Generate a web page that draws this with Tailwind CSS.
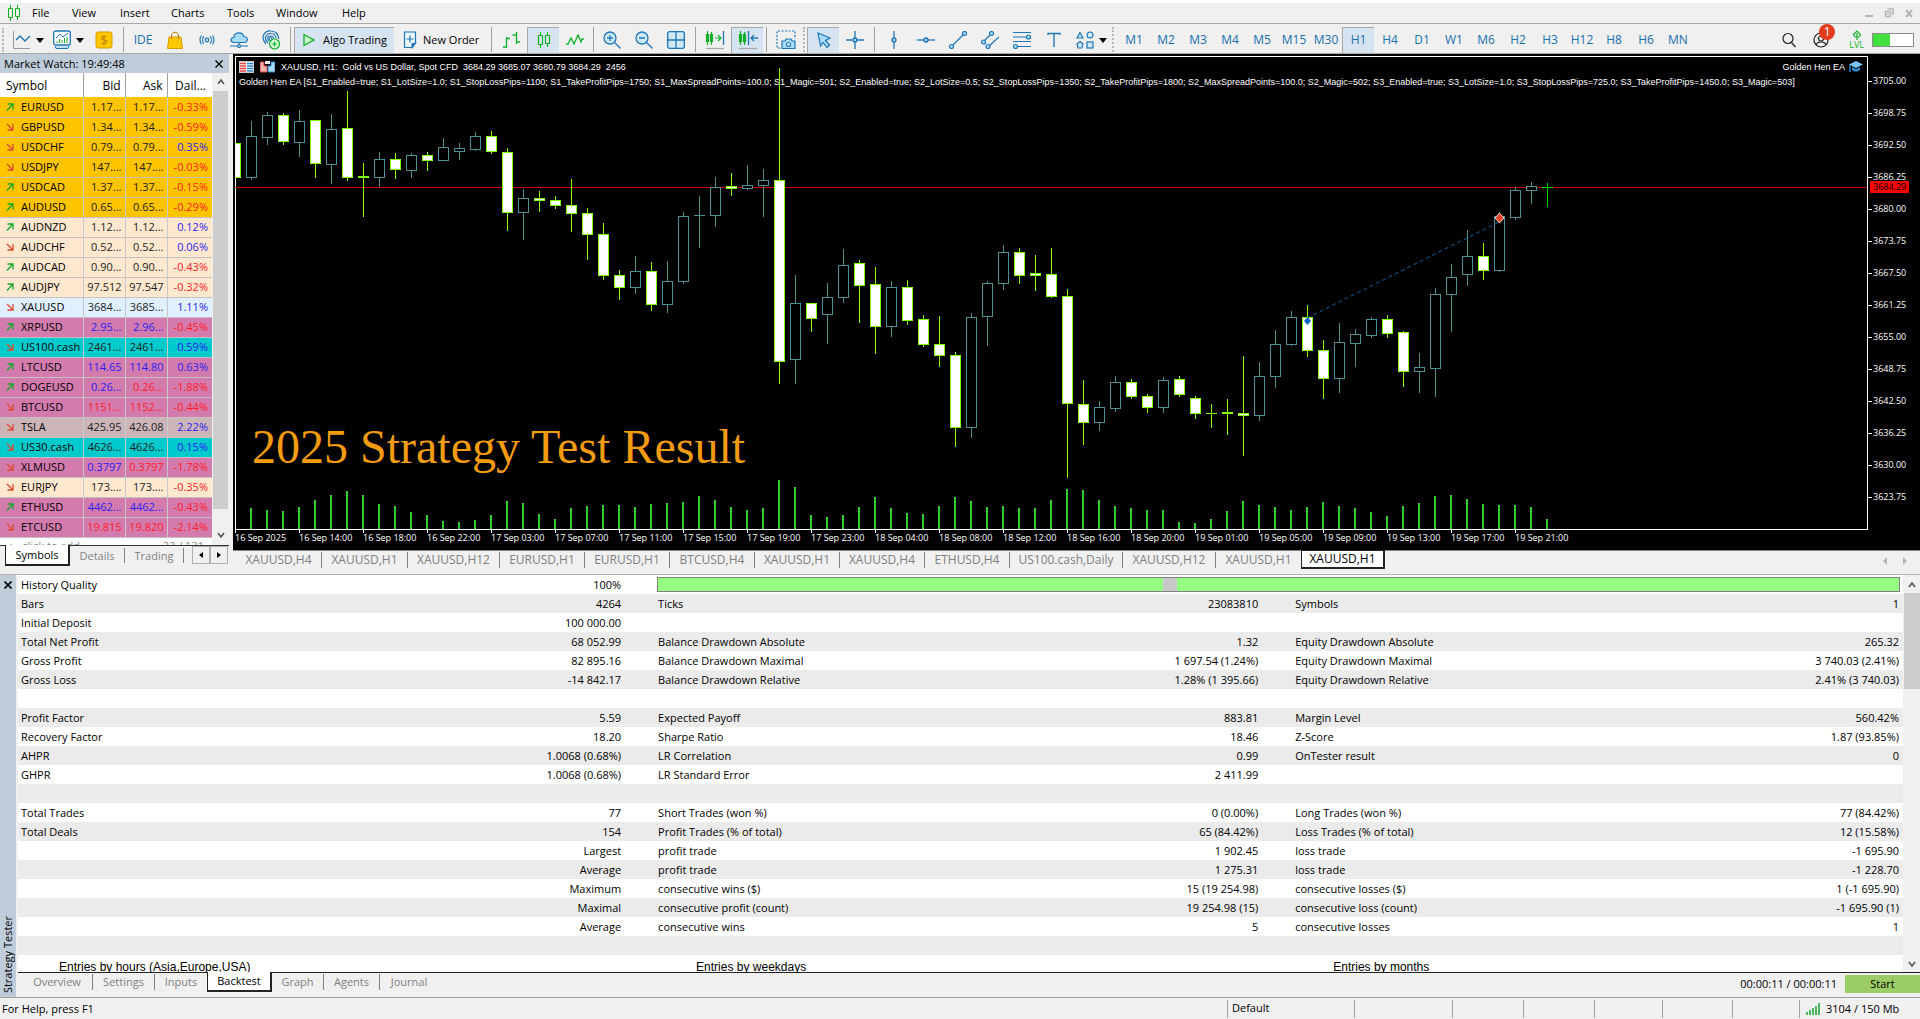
<!DOCTYPE html>
<html lang="en">
<head>
    <meta charset="UTF-8">
    <title>XAUUSD,H1 - Strategy Tester</title>
    <meta name="viewport" content="width=device-width, initial-scale=1.0">
    <script src="https://cdn.jsdelivr.net/npm/@tailwindcss/browser@4"></script>
</head>
<body class="h-screen flex flex-col overflow-hidden bg-[#f0f0f0] text-black font-['Open_Sans','Noto_Sans',sans-serif] text-[11px] leading-4 whitespace-nowrap">

    <!-- Menu bar -->
    <header class="flex items-center h-6 pt-[3px] border-b border-[#a8a8a8] shadow-[inset_0_3px_0_#fff]">
        <svg class="ml-2 w-3 h-4" viewBox="0 0 12 16" fill="none" stroke="#10b020"><path d="M2.500 0v3M2.500 13v3M9.500 0v3M9.500 12v3M.5 3.500h4v9h-4zM7.500 3.500h4v8h-4z"/></svg>
        <nav class="flex ml-3">
            <button class="w-10 text-left">File</button>
            <button class="w-12 text-left">View</button>
            <button class="w-[51px] text-left">Insert</button>
            <button class="w-14 text-left">Charts</button>
            <button class="w-[49px] text-left">Tools</button>
            <button class="w-[66px] text-left">Window</button>
            <button class="text-left">Help</button>
        </nav>
        <div class="ml-auto mr-1.5 flex items-center gap-2.5 text-[#b4b4b4]">
            <button aria-label="Minimize"><svg class="w-2.5 h-2.5" viewBox="0 0 10 10"><path d="M1 8h8" stroke="currentColor" stroke-width="2"/></svg></button>
            <button aria-label="Restore"><svg class="w-2.5 h-2.5" viewBox="0 0 10 10" fill="none" stroke="currentColor" stroke-width="1.500"><path d="M1.500 3.500h5v5h-5zM3.500 1h5.500v6M4 5v2"/></svg></button>
            <button aria-label="Close"><svg class="w-2.5 h-2.5" viewBox="0 0 10 10"><path d="M2 2l6 7M8 2L2 9" stroke="currentColor" stroke-width="2"/></svg></button>
        </div>
    </header>

    <!-- Toolbar -->
    <div class="flex items-center h-[30px] pt-0.5 border-b border-[#a8a8a8] text-[#1a6fad] text-[12px]">
        <span class="h-6 ml-0.5 mr-1 border-l-2 border-dotted border-[#b8b8b8]"></span>
        <button class="flex items-center gap-1 w-10 pl-[5px]" aria-label="Line chart">
            <svg class="w-[18px] h-[18px]" viewBox="0 0 18 18" fill="none"><path d="M.5 0v17.500H17" stroke="#999"/><path d="M3 9l4-4 5 5 5-5" stroke="#1f75b5" stroke-width="1.400"/></svg>
            <svg class="w-2.5 h-2 text-black" viewBox="0 0 10 8"><path d="M1 2h8L5 7z"/></svg>
        </button>
        <button class="flex items-center gap-1 w-10 pl-[5px]" aria-label="Templates">
            <svg class="w-[18px] h-5" viewBox="0 0 18 20" fill="none" stroke="#1f75b5"><rect x=".7" y="1" width="16.600" height="14" rx="2" fill="#fff" stroke-width="1.300"/><path d="M2 16l1 2.500h12l1-2.500" fill="#bfe3fb"/><path d="M3 8l4-4 3 3 5-4"/><path d="M4 13v-2M6.500 13V9M9 13v-3M11.500 13V8M14 13V7" stroke="#20b030"/></svg>
            <svg class="w-2.5 h-2" viewBox="0 0 10 8"><path d="M1 2h8L5 7z"/></svg>
        </button>
        <button class="flex w-8 justify-center" aria-label="Quotes">
            <svg class="w-[18px] h-[18px]" viewBox="0 0 18 18"><rect x="1" y="1" width="16" height="16" rx="2" fill="#ffc800" stroke="#d69a00"/><text x="9" y="14" text-anchor="middle" font-size="13" fill="#b87800">$</text></svg>
        </button>
        <span class="mx-[3px] w-px h-[25px] bg-[#a0a0a0]"></span>
        <button class="w-8">IDE</button>
        <button class="flex w-8 justify-center" aria-label="Market">
            <svg class="w-4 h-[18px]" viewBox="0 0 16 18" fill="none"><path d="M2 6h12l1.500 11.500H.5z" fill="#ffc800" stroke="#d69a00"/><path d="M4.500 8V5c0-5 7-5 7 0v3" stroke="#b87800"/></svg>
        </button>
        <button class="flex w-8 justify-center" aria-label="Signals">
            <svg class="w-[18px] h-4" viewBox="0 0 18 16" fill="none" stroke="#1f75b5" stroke-width="1.200"><circle cx="9" cy="8" r="1.800" fill="#bfe3fb"/><path d="M6 4.500c-2 2-2 5 0 7M12 4.500c2 2 2 5 0 7M3.500 3.500c-2 3-2 6 0 9M14.500 3.500c2 3 2 6 0 9"/></svg>
        </button>
        <button class="flex w-8 justify-center" aria-label="Cloud">
            <svg class="w-[18px] h-4" viewBox="0 0 18 16" fill="none" stroke="#1f75b5" stroke-width="1.200"><path d="M4 10.500c-4-.5-4-5 0-5 0-6 9-6 9.500-1 5 0 5 6 .5 6z" fill="#a9dcfb"/><path d="M9 10.500v3M0 14h7M11 14h7"/><circle cx="9" cy="14" r="1.500"/></svg>
        </button>
        <button class="flex w-8 justify-center" aria-label="Virtual hosting">
            <svg class="w-[18px] h-5" viewBox="0 0 18 20" fill="none" stroke="#1f75b5" stroke-width="1.200"><path d="M4 14C-3 6 4 0 9 1c5 0 8 4 7.500 8M6 13C0 7 6 3 9 3.500c3 0 5 2 5 5M7 11c-3-4 0-5 2-5 1.500 0 2.500 1 2.500 2.500"/><circle cx="8.500" cy="9" r="1.500"/><circle cx="12.500" cy="14" r="5" fill="#d6ffd6" stroke="#12b02a"/><path d="M12.500 11.500v5M10 14h5" stroke="#12b02a"/></svg>
        </button>
        <span class="mx-[3px] w-px h-[25px] bg-[#a0a0a0]"></span>
        <button class="flex items-center gap-2 w-[100px] h-[26px] pl-2 bg-[#d6e4f1] border-t border-l border-[#a8a8a8] text-black text-[11px]">
            <svg class="w-3 h-3.5" viewBox="0 0 12 14"><path d="M1 1.500v11L11 7z" fill="#c9f8c9" stroke="#12b02a" stroke-width="1.300"/></svg>
            Algo Trading
        </button>
        <button class="flex items-center gap-1.5 w-[94px] pl-[9px] text-black text-[11px]">
            <svg class="w-3.5 h-[18px]" viewBox="0 0 14 18" fill="none" stroke="#1f75b5" stroke-width="1.200"><path d="M2 1h10.500v11L9 16.500H1.500V1z" fill="#eaf6ff"/><path d="M12.500 12L9 16.500V13z" fill="#1f75b5"/><path d="M7 4.500v7M3.500 8h7"/></svg>
            New Order
        </button>
        <span class="mx-[3px] w-px h-[25px] bg-[#a0a0a0]"></span>
        <button class="flex w-8 justify-center" aria-label="Bars">
            <svg class="w-[18px] h-[18px]" viewBox="0 0 18 18" fill="none" stroke="#12b02a" stroke-width="1.300"><path d="M1 16h3.500M4.500 6v11M4.500 7.500H8M10.500 4h4M14.500 1v12M14.500 11H18"/></svg>
        </button>
        <button class="flex w-8 h-[26px] items-center justify-center bg-[#d6e4f1] border-t border-l border-[#a8a8a8]" aria-label="Candles">
            <svg class="w-3.5 h-4" viewBox="0 0 14 16" fill="none" stroke="#12b02a" stroke-width="1.200"><path d="M3.500 0v3M3.500 13v3M10.500 0v3M10.500 12v3M1.500 3.500h4v9h-4zM8.500 3.500h4v8h-4z"/></svg>
        </button>
        <button class="flex w-8 justify-center" aria-label="Line">
            <svg class="w-[18px] h-3" viewBox="0 0 18 12" fill="none" stroke="#12b02a" stroke-width="1.300"><path d="M0 10h2l3-6 3 6 4-9 3 7 1-3h2"/></svg>
        </button>
        <span class="mx-0.5 w-px h-[25px] bg-[#a0a0a0]"></span>
        <button class="flex w-8 justify-center" aria-label="Zoom in">
            <svg class="w-[18px] h-[18px]" viewBox="0 0 18 18" fill="none" stroke="#1f75b5" stroke-width="1.300"><circle cx="7" cy="7" r="6" fill="#cdeafc"/><path d="M11.500 11.500l6 6M7 4v6M4 7h6"/></svg>
        </button>
        <button class="flex w-8 justify-center" aria-label="Zoom out">
            <svg class="w-[18px] h-[18px]" viewBox="0 0 18 18" fill="none" stroke="#1f75b5" stroke-width="1.300"><circle cx="7" cy="7" r="6" fill="#cdeafc"/><path d="M11.500 11.500l6 6M4 7h6"/></svg>
        </button>
        <button class="flex w-8 justify-center" aria-label="Tile windows">
            <svg class="w-[18px] h-[18px]" viewBox="0 0 18 18" fill="#cdeafc" stroke="#1f75b5" stroke-width="1.300"><rect x=".7" y=".7" width="16.600" height="16.600" rx="2"/><path d="M9 1v16M1 9h16"/></svg>
        </button>
        <span class="mx-[3px] w-px h-[25px] bg-[#a0a0a0]"></span>
        <button class="flex w-8 justify-center" aria-label="Auto scroll">
            <svg class="w-5 h-5" viewBox="0 0 20 20" fill="none" stroke="#12b02a" stroke-width="1.200"><path d="M2.500 1v14M6.500 2v13M1.500 4.500h2v7h-2zM5.500 4.500h2v7h-2zM10 8h6M13 5l3 3-3 3"/><path d="M18.500 1v14" stroke="#1f75b5" stroke-width="1.300"/><path d="M1 18.500h18" stroke="#aaa"/></svg>
        </button>
        <button class="flex w-8 h-[26px] items-center justify-center bg-[#d6e4f1] border-t border-l border-[#a8a8a8]" aria-label="Chart shift">
            <svg class="w-5 h-5" viewBox="0 0 20 20" fill="none" stroke="#12b02a" stroke-width="1.200"><path d="M2.500 1v14M6.500 2v13M1.500 4.500h2v7h-2zM5.500 4.500h2v7h-2z"/><path d="M10.500 1v14M13 8h7M16 5l-3 3 3 3" stroke="#1f75b5" stroke-width="1.300"/><path d="M1 18.500h18" stroke="#aaa"/></svg>
        </button>
        <span class="mx-[3px] w-px h-[25px] bg-[#a0a0a0]"></span>
        <button class="flex w-8 justify-center" aria-label="Screenshot">
            <svg class="w-5 h-5" viewBox="0 0 20 20" fill="none" stroke="#1f75b5" stroke-width="1.200"><path d="M4 18H1V1h18v8" stroke-dasharray="2 1.500"/><path d="M6 11h3l1-2h5l1 2h3v7.500H6z" fill="#a9dcfb"/><circle cx="12.500" cy="14.500" r="2" fill="#fff"/></svg>
        </button>
        <span class="h-[25px] ml-px mr-0.5 border-l-2 border-dotted border-[#b8b8b8]"></span>
        <button class="flex w-8 h-[26px] items-center justify-center bg-[#d6e4f1] border-t border-l border-[#a8a8a8]" aria-label="Cursor">
            <svg class="w-3.5 h-4" viewBox="0 0 14 16"><path d="M1 1l12 5-4.500 2.500 4 4.500-2.500 2.500-4-5L3.500 14z" fill="#a9dcfb" stroke="#1f75b5" stroke-width="1.200"/></svg>
        </button>
        <button class="flex w-8 justify-center" aria-label="Crosshair">
            <svg class="w-[18px] h-[18px]" viewBox="0 0 18 18" fill="#a9dcfb" stroke="#1f75b5" stroke-width="1.300"><path d="M9 0v18M0 9h18"/><circle cx="9" cy="9" r="2"/></svg>
        </button>
        <span class="mx-[3px] w-px h-[25px] bg-[#a0a0a0]"></span>
        <button class="flex w-8 justify-center" aria-label="Vertical line">
            <svg class="w-[18px] h-[18px]" viewBox="0 0 18 18" fill="#a9dcfb" stroke="#1f75b5" stroke-width="1.300"><path d="M9 0v18"/><circle cx="9" cy="9" r="2"/></svg>
        </button>
        <button class="flex w-8 justify-center" aria-label="Horizontal line">
            <svg class="w-[18px] h-[18px]" viewBox="0 0 18 18" fill="#a9dcfb" stroke="#1f75b5" stroke-width="1.300"><path d="M0 9h18"/><circle cx="9" cy="9" r="2"/></svg>
        </button>
        <button class="flex w-8 justify-center" aria-label="Trendline">
            <svg class="w-[18px] h-[18px]" viewBox="0 0 18 18" fill="#a9dcfb" stroke="#1f75b5" stroke-width="1.200"><path d="M3 15L15 3"/><circle cx="2.500" cy="15.500" r="2"/><circle cx="15.500" cy="2.500" r="2"/></svg>
        </button>
        <button class="flex w-8 justify-center" aria-label="Channel">
            <svg class="w-[18px] h-[18px]" viewBox="0 0 18 18" fill="#a9dcfb" stroke="#1f75b5" stroke-width="1.200"><path d="M2 11l9-9M7 16L18 6"/><circle cx="10.500" cy="2.500" r="2"/><circle cx="2.500" cy="11" r="2"/><circle cx="7" cy="15.500" r="2"/></svg>
        </button>
        <button class="flex w-8 justify-center" aria-label="Fibonacci">
            <svg class="w-[18px] h-[18px]" viewBox="0 0 18 18" fill="#a9dcfb" stroke="#1f75b5" stroke-width="1.200"><path d="M0 1.500h18M0 6h14M0 10.500h18M4 15.500h14"/><circle cx="15.500" cy="6" r="2"/><circle cx="2.500" cy="15.500" r="2"/></svg>
        </button>
        <button class="flex w-8 justify-center" aria-label="Text">
            <svg class="w-3.5 h-4" viewBox="0 0 14 16" fill="none" stroke="#1f75b5" stroke-width="1.400"><path d="M1 3V1.500h12V3M7 1.500V15"/></svg>
        </button>
        <button class="flex items-center gap-1 w-10 pl-1.5" aria-label="Shapes">
            <svg class="w-[18px] h-[18px]" viewBox="0 0 18 18" fill="#cdeafc" stroke="#1f75b5" stroke-width="1.200"><path d="M4 1.500L7 7H1z"/><circle cx="14" cy="4" r="3"/><path d="M4 10.500l3 2.500-1 4H2l-1-4z"/><rect x="11" y="11" width="6" height="6"/></svg>
            <svg class="w-2.5 h-2" viewBox="0 0 10 8"><path d="M1 2h8L5 7z"/></svg>
        </button>
        <span class="h-[25px] ml-0.5 mr-1 border-l-2 border-dotted border-[#b8b8b8]"></span>
        <div id="periods" class="flex items-center"></div>
        <div class="ml-auto mr-1.5 flex items-center">
            <button aria-label="Search"><svg class="w-4 h-4" viewBox="0 0 16 16" fill="none" stroke="#222" stroke-width="1.200"><circle cx="7" cy="6.500" r="5"/><path d="M10.500 10.500l4 4.500"/></svg></button>
            <button class="relative ml-4 mr-5" aria-label="Account">
                <svg class="w-4 h-4" viewBox="0 0 16 16" fill="none" stroke="#222" stroke-width="1.200"><circle cx="8" cy="8" r="7"/><circle cx="8" cy="6.500" r="2.500"/><path d="M3 13c1-4 9-4 10 0"/></svg>
                <span class="absolute -top-2 left-1.5 w-4 h-4 rounded-full bg-[#e33a1c] text-white text-[12px] leading-4">1</span>
            </button>
            <button class="flex flex-col items-center text-[#12b02a] text-[9px] leading-[9px]">
                <svg class="w-2.5 h-2.5" viewBox="0 0 10 10" fill="none" stroke="currentColor" stroke-width="1.200"><path d="M5 10V3M1.500 4.500L5 1l3.500 3.500L7 7H3z"/></svg>LVL
            </button>
            <span class="ml-2 flex w-[42px] h-3.5 border border-[#8c8c8c] bg-white"><span class="w-[42%] bg-[#3fdf3f]"></span></span>
        </div>
    </div>

    <div class="flex border-b border-[#b4b4b4]">
        <!-- Market Watch -->
        <aside class="w-[229px] flex flex-col">
            <div class="flex items-center justify-between h-[19px] pl-1 pr-1.5 bg-[#bfcddb]">
                <h2>Market Watch: 19:49:48</h2>
                <button aria-label="Close Market Watch"><svg class="w-2 h-2" viewBox="0 0 8 8"><path d="M.5 .5l7 7M7.500 .5l-7 7" stroke="#000" stroke-width="1.400"/></svg></button>
            </div>
            <div class="flex">
                <div class="flex-1 bg-white h-[472px] overflow-hidden">
                    <table class="w-full table-fixed">
                        <thead>
                            <tr class="h-6 text-[12px]">
                                <th class="w-[83px] pt-px pl-1.5 text-left font-normal border-r border-[#a0a0a0]">Symbol</th>
                                <th class="w-[42px] pt-px pr-1 text-right font-normal border-r border-[#a0a0a0]">Bid</th>
                                <th class="w-[42px] pt-px pr-1 text-right font-normal border-r border-[#a0a0a0]">Ask</th>
                                <th class="pt-px pr-1.5 text-right font-normal">Dail...</th>
                            </tr>
                        </thead>
                        <tbody id="quotes"></tbody>
                    </table>
                    <div class="flex justify-between pl-2 pr-2 text-[#888]"><span><span class="text-[#12b02a] mr-2">+</span>click to add...</span><span>22 / 131</span></div>
                </div>
                <div class="w-[17px] flex flex-col items-center bg-[#f0f0f0]">
                    <button class="h-[18px]" aria-label="Scroll up"><svg class="w-2 h-2" viewBox="0 0 8 8"><path d="M1 6l3-4 3 4" fill="none" stroke="#555" stroke-width="1.600"/></svg></button>
                    <div class="w-[15px] flex-1 bg-[#cdcdcd]"></div>
                    <button class="h-9 pt-4" aria-label="Scroll down"><svg class="w-2 h-2" viewBox="0 0 8 8"><path d="M1 2l3 4 3-4" fill="none" stroke="#555" stroke-width="1.600"/></svg></button>
                </div>
            </div>
            <div class="flex items-start h-[29px] pl-[5px] border-t border-[#333] text-[#808080]">
                <button class="w-[65px] h-[21px] -mt-px bg-white border border-t-0 border-r-2 border-b-2 border-[#222] text-black">Symbols</button>
                <button class="w-[55px] mt-0.5 h-[15px] leading-[15px] border-r border-[#808080]">Details</button>
                <button class="w-[59px] mt-0.5 h-[15px] leading-[15px] border-r border-[#808080]">Trading</button>
                <div class="ml-2 flex">
                    <button class="w-[18px] h-[18px] border border-[#b0b0b0] flex items-center justify-center" aria-label="Previous tab"><svg class="w-1.5 h-1.5" viewBox="0 0 6 6"><path d="M5 0v6L1 3z"/></svg></button>
                    <button class="w-[18px] h-[18px] border border-[#b0b0b0] flex items-center justify-center" aria-label="Next tab"><svg class="w-1.5 h-1.5" viewBox="0 0 6 6"><path d="M1 0v6l4-3z"/></svg></button>
                </div>
            </div>
        </aside>

        <!-- Chart window -->
        <main class="flex-1 min-w-0 ml-1 flex flex-col">
            <div class="flex-1 flex pt-0.5 pl-0.5 bg-black text-white text-[9px]">
                <div class="flex-1 min-w-0 flex flex-col">
                    <div class="relative flex-1 overflow-hidden border-r border-white font-['Liberation_Sans',sans-serif]">
                        <svg id="chart" class="absolute inset-0 w-full h-full" shape-rendering="crispEdges"></svg>
                        <div class="absolute top-[3px] left-1 right-1 flex items-center h-4">
                            <svg class="w-[15px] h-3" viewBox="0 0 15 12"><rect x=".5" y=".5" width="14" height="11" fill="#fff" stroke="#ccc"/><path d="M1 2.500h6M1 5h6M1 7.500h6M1 10h6" stroke="#e5403a" stroke-width="1.400"/><path d="M8 2.500h6M8 5h6M8 7.500h6M8 10h6" stroke="#2b85c9" stroke-width="1.400"/></svg>
                            <svg class="ml-1.5 w-[15px] h-3" viewBox="0 0 15 12"><path d="M0 1h4v4h3v6H0z" fill="#f4b4ae" stroke="#e5403a"/><path d="M15 1h-4v4H8v6h7z" fill="#a9dcfb" stroke="#2b85c9"/><path d="M5 0h5v3H5z" fill="#eee"/></svg>
                            <span class="ml-1.5 whitespace-pre">XAUUSD, H1:  Gold vs US Dollar, Spot CFD  3684.29 3685.07 3680.79 3684.29  2456</span>
                            <span class="ml-auto">Golden Hen EA</span>
                            <svg class="ml-1 w-3.5 h-3" viewBox="0 0 14 12"><path d="M7 0l7 3.500L7 7 0 3.500z" fill="#7cc4f5"/><path d="M3 6v3c2 2 6 2 8 0V6L7 8z" fill="#2b85c9"/><path d="M1 4v7" stroke="#2b85c9" stroke-width="1.500"/></svg>
                        </div>
                        <p class="absolute top-[18px] left-1">Golden Hen EA [S1_Enabled=true; S1_LotSize=1.0; S1_StopLossPips=1100; S1_TakeProfitPips=1750; S1_MaxSpreadPoints=100.0; S1_Magic=501; S2_Enabled=true; S2_LotSize=0.5; S2_StopLossPips=1350; S2_TakeProfitPips=1800; S2_MaxSpreadPoints=100.0; S2_Magic=502; S3_Enabled=true; S3_LotSize=1.0; S3_StopLossPips=725.0; S3_TakeProfitPips=1450.0; S3_Magic=503]</p>
                        <h1 class="absolute left-[17px] bottom-[58px] text-5xl text-[#f39c12] font-['Liberation_Serif',serif]">2025 Strategy Test Result</h1>
                    </div>
                    <div id="timeAxis" class="flex h-[21px] border-t border-white"></div>
                </div>
                <div id="priceAxis" class="relative w-[52px] pt-[9px]"></div>
            </div>
            <div class="flex items-start h-6 pl-[3px] border-t border-[#808080] text-[#808080] text-[12px]">
                <div id="chartTabs" class="flex items-start"></div>
                <div class="ml-auto mr-3 mt-1.5 flex gap-3.5">
                    <button aria-label="Scroll tabs left"><svg class="w-1.5 h-2" viewBox="0 0 6 8"><path d="M5 0v8L1 4z" fill="#b4b4b4"/></svg></button>
                    <button aria-label="Scroll tabs right"><svg class="w-1.5 h-2" viewBox="0 0 6 8"><path d="M1 0v8l4-4z" fill="#b4b4b4"/></svg></button>
                </div>
            </div>
        </main>
    </div>

    <!-- Strategy Tester -->
    <section class="flex-1 min-h-0 flex">
        <div class="w-4 flex flex-col items-center justify-between pt-1.5 pb-1 bg-[#bfcddb]">
            <button aria-label="Close Strategy Tester"><svg class="w-2 h-2" viewBox="0 0 8 8"><path d="M.5 .5l7 7M7.500 .5l-7 7" stroke="#000" stroke-width="1.600"/></svg></button>
            <h2 class="[writing-mode:vertical-rl] rotate-180">Strategy Tester</h2>
        </div>
        <div class="flex-1 min-w-0 flex flex-col pl-0.5">
            <div class="flex-1 min-h-0 flex border-b border-[#222]">
                <div class="flex-1 overflow-hidden bg-white">
                    <table class="w-full table-fixed">
                        <colgroup>
                            <col class="w-[17%]"><col class="w-[16.8%]">
                            <col class="w-[17%]"><col class="w-[16.8%]">
                            <col class="w-[17%]"><col>
                        </colgroup>
                        <tbody id="report"></tbody>
                    </table>
                </div>
                <div class="w-4 ml-px flex flex-col items-center">
                    <button class="h-[18px] pt-0.5" aria-label="Scroll report up"><svg class="w-2 h-2" viewBox="0 0 8 8"><path d="M1 6l3-4 3 4" fill="none" stroke="#555" stroke-width="1.600"/></svg></button>
                    <div class="w-4 h-24 bg-[#cdcdcd]"></div>
                    <button class="mt-auto h-4" aria-label="Scroll report down"><svg class="w-2 h-2" viewBox="0 0 8 8"><path d="M1 2l3 4 3-4" fill="none" stroke="#555" stroke-width="1.600"/></svg></button>
                </div>
            </div>
            <div class="flex items-start h-6 text-[#808080]">
                <button class="w-[75px] pl-1 mt-px border-r border-[#808080]">Overview</button>
                <button class="w-[62px] mt-px border-r border-[#808080]">Settings</button>
                <button class="w-[52px] mt-px">Inputs</button>
                <button class="w-[65px] h-5 -mt-px bg-white border border-t-0 border-r-2 border-b-2 border-[#222] text-black">Backtest</button>
                <button class="w-[52px] mt-px border-r border-[#808080]">Graph</button>
                <button class="w-14 mt-px border-r border-[#808080]">Agents</button>
                <button class="w-[58px] mt-px">Journal</button>
                <span class="ml-auto mt-[3px] text-black">00:00:11 / 00:00:11</span>
                <button class="ml-2 mt-0.5 w-[75px] h-[18px] bg-[#9ccc65] text-black">Start</button>
            </div>
        </div>
    </section>

    <!-- Status bar -->
    <footer class="flex items-center h-[22px] pt-px pl-0.5 pr-5 border-t border-[#a0a0a0]">
        <span class="flex-1">For Help, press F1</span>
        <span class="w-[127px] h-[18px] pl-1 border-l border-[#a0a0a0]">Default</span>
        <span class="w-[98px] h-[18px] border-l border-[#a0a0a0]"></span>
        <span class="w-[71px] h-[18px] border-l border-[#a0a0a0]"></span>
        <span class="w-[71px] h-[18px] border-l border-[#a0a0a0]"></span>
        <span class="w-[68px] h-[18px] border-l border-[#a0a0a0]"></span>
        <span class="w-[70px] h-[18px] border-l border-[#a0a0a0]"></span>
        <span class="w-[67px] h-[18px] border-l border-[#a0a0a0]"></span>
        <span class="flex items-center gap-1.5 w-[101px] h-[18px] pl-1.5 border-l border-[#a0a0a0]">
            <svg class="w-3.5 h-3" viewBox="0 0 14 12"><path d="M1 9v3M4 7v5M7 5v7M10 3v9M13 0v12" stroke="#22a83a" stroke-width="1.600"/></svg>
            3104 / 150 Mb
        </span>
    </footer>

    <script>
    // ---- timeframes ----
    const periods = ['M1', 'M2', 'M3', 'M4', 'M5', 'M15', 'M30', 'H1', 'H4', 'D1', 'W1', 'M6', 'H2', 'H3', 'H12', 'H8', 'H6', 'MN'];
    document.getElementById('periods').innerHTML = periods.map(p =>
        `<button class="w-8 h-[26px] ${p === 'H1' ? 'bg-[#d6e4f1] border-t border-l border-[#a8a8a8]' : ''}">${p}</button>`).join('');

    // ---- market watch ----
    const rowBg = { y: 'bg-[#ffc400]', p: 'bg-[#ffe8ce]', s: 'bg-[#e1f0ff]', m: 'bg-[#d47bae]', t: 'bg-[#00cacc]', g: 'bg-[#cbb5b8]' };
    const ink = { k: 'text-[#222]', b: 'text-[#2a20f0]', r: 'text-[#ff1c28]' };
    // direction, symbol, bid, ask, change, row colour, bid/ask/change ink
    const quotes = [
        ['u', 'EURUSD', '1.17...', '1.17...', '-0.33%', 'y', 'kkr'],
        ['d', 'GBPUSD', '1.34...', '1.34...', '-0.59%', 'y', 'kkr'],
        ['d', 'USDCHF', '0.79...', '0.79...', '0.35%', 'y', 'kkb'],
        ['d', 'USDJPY', '147....', '147....', '-0.03%', 'y', 'kkr'],
        ['u', 'USDCAD', '1.37...', '1.37...', '-0.15%', 'y', 'kkr'],
        ['u', 'AUDUSD', '0.65...', '0.65...', '-0.29%', 'y', 'kkr'],
        ['u', 'AUDNZD', '1.12...', '1.12...', '0.12%', 'p', 'kkb'],
        ['d', 'AUDCHF', '0.52...', '0.52...', '0.06%', 'p', 'kkb'],
        ['u', 'AUDCAD', '0.90...', '0.90...', '-0.43%', 'p', 'kkr'],
        ['u', 'AUDJPY', '97.512', '97.547', '-0.32%', 'p', 'kkr'],
        ['d', 'XAUUSD', '3684...', '3685...', '1.11%', 's', 'kkb'],
        ['u', 'XRPUSD', '2.95...', '2.96...', '-0.45%', 'm', 'bbr'],
        ['d', 'US100.cash', '2461...', '2461...', '0.59%', 't', 'kkb'],
        ['u', 'LTCUSD', '114.65', '114.80', '0.63%', 'm', 'bbb'],
        ['u', 'DOGEUSD', '0.26...', '0.26...', '-1.88%', 'm', 'brr'],
        ['d', 'BTCUSD', '1151...', '1152...', '-0.44%', 'm', 'rrr'],
        ['d', 'TSLA', '425.95', '426.08', '2.22%', 'g', 'kkb'],
        ['d', 'US30.cash', '4626...', '4626...', '0.15%', 't', 'kkb'],
        ['d', 'XLMUSD', '0.3797', '0.3797', '-1.78%', 'm', 'brr'],
        ['d', 'EURJPY', '173....', '173....', '-0.35%', 'p', 'kkr'],
        ['u', 'ETHUSD', '4462...', '4462...', '-0.43%', 'm', 'bbr'],
        ['d', 'ETCUSD', '19.815', '19.820', '-2.14%', 'm', 'rrr'],
    ];
    const arrows = {
        u: '<svg class="w-2 h-2" viewBox="0 0 8 8" fill="none" stroke="#12a82a" stroke-width="1.3"><path d="M1 7.500L7 1M1.500 1H7v5.500"/></svg>',
        d: '<svg class="w-2 h-2" viewBox="0 0 8 8" fill="none" stroke="#e04830" stroke-width="1.3"><path d="M1 1l6 6M7 1v6H1.500"/></svg>',
    };
    document.getElementById('quotes').innerHTML = quotes.map(([dir, name, bid, ask, chg, bg, c]) => `
        <tr class="h-5 border-b border-[#c4bfc0] ${rowBg[bg]}">
            <td class="pl-1.5 border-r border-[#c8c8c8]"><div class="flex items-center gap-[7px]">${arrows[dir]}${name}</div></td>
            <td class="pr-[3px] text-right border-r border-[#c8c8c8] ${ink[c[0]]}">${bid}</td>
            <td class="pr-[3px] text-right border-r border-[#c8c8c8] ${ink[c[1]]}">${ask}</td>
            <td class="pr-1 text-right ${ink[c[2]]}">${chg}</td>
        </tr>`).join('');

    // ---- chart ----
    // kind (w = down, b = up, g = current), high, body top, body bottom, low, volume
    const bars = [
        ['w',87,87,121,121,0],['b',65,80,121,123,21],['b',56,59,81,88,19],['w',57,59,85,88,18],['b',54,65,86,100,22],
        ['w',64,64,107,121,29],['b',58,73,108,127,34],['w',35,72,121,124,38],['w',107,120,121,160,34],['b',96,103,121,130,25],
        ['w',97,103,113,122,23],['b',97,99,114,121,17],['w',96,99,104,114,14],['b',82,91,104,104,8],['b',87,92,95,103,7],
        ['b',76,80,93,94,9],['w',75,80,95,97,14],['w',92,96,156,174,28],['b',133,142,156,183,26],['w',135,142,144,155,15],
        ['w',140,144,149,152,10],['w',123,149,157,175,21],['w',152,157,178,203,23],['w',167,178,219,223,24],['w',214,219,231,243,24],
        ['b',200,215,231,237,22],['w',206,215,248,254,25],['b',205,225,248,256,26],['b',156,160,225,227,27],['b',140,159,159,191,33],
        ['b',121,131,159,170,29],['w',117,130,132,139,22],['b',109,129,132,133,19],['b',113,124,129,160,21],['w',12,124,305,327,49],
        ['b',219,247,303,327,42],['w',247,247,262,275,14],['b',227,241,258,287,12],['b',193,209,241,246,14],['w',204,207,229,266,22],
        ['w',211,228,270,297,32],['b',225,231,270,280,21],['w',224,231,264,268,16],['w',259,263,288,290,15],['w',260,288,299,310,23],
        ['w',296,299,371,390,32],['b',257,261,371,381,28],['b',225,227,260,289,22],['b',189,196,227,233,23],['w',192,196,219,227,21],
        ['w',199,217,219,234,21],['w',192,218,240,241,29],['w',233,240,347,421,40],['w',324,348,366,388,39],['b',345,351,366,374,29],
        ['b',320,326,352,355,23],['w',323,326,340,342,21],['w',338,340,351,356,19],['b',321,324,351,356,19],['w',320,323,338,340,7],
        ['w',340,342,357,362,6],['w',348,357,357,371,10],['w',343,356,357,378,18],['w',300,357,359,399,28],['b',306,320,359,364,24],
        ['b',274,288,320,331,22],['b',255,261,288,289,19],['w',249,261,294,300,22],['w',284,294,322,342,27],['b',267,286,322,336,23],
        ['b',273,278,287,310,21],['b',261,263,279,281,17],['w',259,263,277,281,13],['w',275,276,315,330,23],['b',297,311,315,336,26],
        ['b',232,238,312,340,33],['b',208,221,238,275,34],['b',174,200,218,229,30],['w',187,200,214,223,25],['b',156,160,214,215,24],
        ['b',131,134,161,163,24],['b',126,130,134,147,22],['g',127,131,131,150,10],
    ];
    const stroke = { w: '#7fff00', b: '#4f8f8f', g: '#00e000' };
    const fill = { w: '#fff', b: '#000', g: '#00e000' };
    const base = 473;
    let svg = '<path d="M0 .5h4000M.5 0v473" stroke="#fff"/><path d="M0 131.500h4000" stroke="#d00000"/>';
    bars.forEach(([k, hi, top, bot, lo, vol], i) => {
        const x = i * 16;
        svg += `<rect x="${x}" y="${hi}" width="1" height="${lo - hi + 1}" fill="${stroke[k]}"/>`;
        svg += bot - top < 2
            ? `<rect x="${x - 5}" y="${top}" width="11" height="${bot - top + 1}" fill="${stroke[k]}"/>`
            : `<rect x="${x - 4.5}" y="${top + 0.5}" width="10" height="${bot - top}" fill="${fill[k]}" stroke="${stroke[k]}"/>`;
        svg += `<rect x="${x - 1}" y="${base - vol}" width="2" height="${vol}" fill="#32cd32"/>`;
    });
    // closed deal: entry, exit and the line between them
    svg += '<g shape-rendering="auto"><path d="M1072 262L1264 166" stroke="#1a5fa5" stroke-dasharray="4 3"/>'
        + '<path d="M1072.500 261l3.500 4-3.500 4-3.500-4z" fill="#0a64c8"/>'
        + '<path d="M1264.500 157l4.500 5-4.500 5-4.500-5z" fill="#e84a28" stroke="#f4d0c8"/></g>';
    document.getElementById('chart').innerHTML = svg;

    const times = ['16 Sep 2025', '16 Sep 14:00', '16 Sep 18:00', '16 Sep 22:00', '17 Sep 03:00', '17 Sep 07:00', '17 Sep 11:00',
        '17 Sep 15:00', '17 Sep 19:00', '17 Sep 23:00', '18 Sep 04:00', '18 Sep 08:00', '18 Sep 12:00', '18 Sep 16:00', '18 Sep 20:00',
        '19 Sep 01:00', '19 Sep 05:00', '19 Sep 09:00', '19 Sep 13:00', '19 Sep 17:00', '19 Sep 21:00'];
    document.getElementById('timeAxis').innerHTML = times.map(t =>
        `<div class="w-16 flex-none"><div class="h-[3px] border-l border-white"></div><div class="leading-[10px]">${t}</div></div>`).join('');

    const prices = ['3705.00', '3698.75', '3692.50', '3686.25', '3680.00', '3673.75', '3667.50', '3661.25', '3655.00', '3648.75', '3642.50', '3636.25', '3630.00', '3623.75'];
    document.getElementById('priceAxis').innerHTML = prices.map(p =>
        `<div class="flex items-center gap-px h-8"><span class="w-1 h-px bg-white"></span>${p}</div>`).join('')
        + '<div class="absolute top-[125px] left-0.5 w-[39px] h-3 pl-[3px] leading-3 bg-[#ff0000] text-black">3684.29</div>';

    // ---- chart tabs ----
    const tabs = [['XAUUSD,H4', 'w-[86px]'], ['XAUUSD,H1', 'w-[86px]'], ['XAUUSD,H12', 'w-[92px]'], ['EURUSD,H1', 'w-[85px]'], ['EURUSD,H1', 'w-[85px]'],
        ['BTCUSD,H4', 'w-[85px]'], ['XAUUSD,H1', 'w-[85px]'], ['XAUUSD,H4', 'w-[85px]'], ['ETHUSD,H4', 'w-[85px]'], ['US100.cash,Daily', 'w-[113px]'],
        ['XAUUSD,H12', 'w-[93px]'], ['XAUUSD,H1', 'w-[85px]']];
    document.getElementById('chartTabs').innerHTML = tabs.map(([t, w], i) =>
        `<button class="${w} mt-px ${i < tabs.length - 1 ? 'border-r border-[#808080]' : ''}">${t}</button>`).join('')
        + '<button class="w-[84px] h-[19px] -mt-px bg-white border border-r-2 border-b-2 border-[#222] text-black leading-[14px]">XAUUSD,H1</button>';

    // ---- backtest report ----
    const report = [
        ['History Quality', '100%', null],
        ['Bars', '4264', 'Ticks', '23083810', 'Symbols', '1'],
        ['Initial Deposit', '100 000.00', '', '', '', ''],
        ['Total Net Profit', '68 052.99', 'Balance Drawdown Absolute', '1.32', 'Equity Drawdown Absolute', '265.32'],
        ['Gross Profit', '82 895.16', 'Balance Drawdown Maximal', '1 697.54 (1.24%)', 'Equity Drawdown Maximal', '3 740.03 (2.41%)'],
        ['Gross Loss', '-14 842.17', 'Balance Drawdown Relative', '1.28% (1 395.66)', 'Equity Drawdown Relative', '2.41% (3 740.03)'],
        ['', '', '', '', '', ''],
        ['Profit Factor', '5.59', 'Expected Payoff', '883.81', 'Margin Level', '560.42%'],
        ['Recovery Factor', '18.20', 'Sharpe Ratio', '18.46', 'Z-Score', '1.87 (93.85%)'],
        ['AHPR', '1.0068 (0.68%)', 'LR Correlation', '0.99', 'OnTester result', '0'],
        ['GHPR', '1.0068 (0.68%)', 'LR Standard Error', '2 411.99', '', ''],
        ['', '', '', '', '', ''],
        ['Total Trades', '77', 'Short Trades (won %)', '0 (0.00%)', 'Long Trades (won %)', '77 (84.42%)'],
        ['Total Deals', '154', 'Profit Trades (% of total)', '65 (84.42%)', 'Loss Trades (% of total)', '12 (15.58%)'],
        ['', 'Largest', 'profit trade', '1 902.45', 'loss trade', '-1 695.90'],
        ['', 'Average', 'profit trade', '1 275.31', 'loss trade', '-1 228.70'],
        ['', 'Maximum', 'consecutive wins ($)', '15 (19 254.98)', 'consecutive losses ($)', '1 (-1 695.90)'],
        ['', 'Maximal', 'consecutive profit (count)', '19 254.98 (15)', 'consecutive loss (count)', '-1 695.90 (1)'],
        ['', 'Average', 'consecutive wins', '5', 'consecutive losses', '1'],
        ['', '', '', '', '', ''],
    ];
    const quality = `<td colspan="4" class="pl-0.5 pr-[3px]"><div class="flex h-[15px] border border-[#808080] bg-[#96ff82]"><div class="w-[14px] bg-[#c8c8c8]" style="margin-left:40.7%"></div></div></td>`;
    document.getElementById('report').innerHTML = report.map(r => `
        <tr class="h-[19px] even:bg-[#ebebeb]">
            <td class="pl-[3px]">${r[0]}</td><td class="pr-[34px] text-right">${r[1]}</td>
            ${r[2] === null ? quality : `
            <td class="pl-[3px]">${r[2]}</td><td class="pr-[34px] text-right">${r[3]}</td>
            <td class="pl-[3px]">${r[4]}</td><td class="pr-1 text-right">${r[5]}</td>`}
        </tr>`).join('') + `
        <tr class="h-[19px] font-['Liberation_Sans',sans-serif] text-[12px]">
            <td colspan="2" class="pl-[41px] pt-1">Entries by hours (Asia,Europe,USA)</td>
            <td colspan="2" class="pl-[41px] pt-1">Entries by weekdays</td>
            <td colspan="2" class="pl-[41px] pt-1">Entries by months</td>
        </tr>`;
    </script>

</body>
</html>
